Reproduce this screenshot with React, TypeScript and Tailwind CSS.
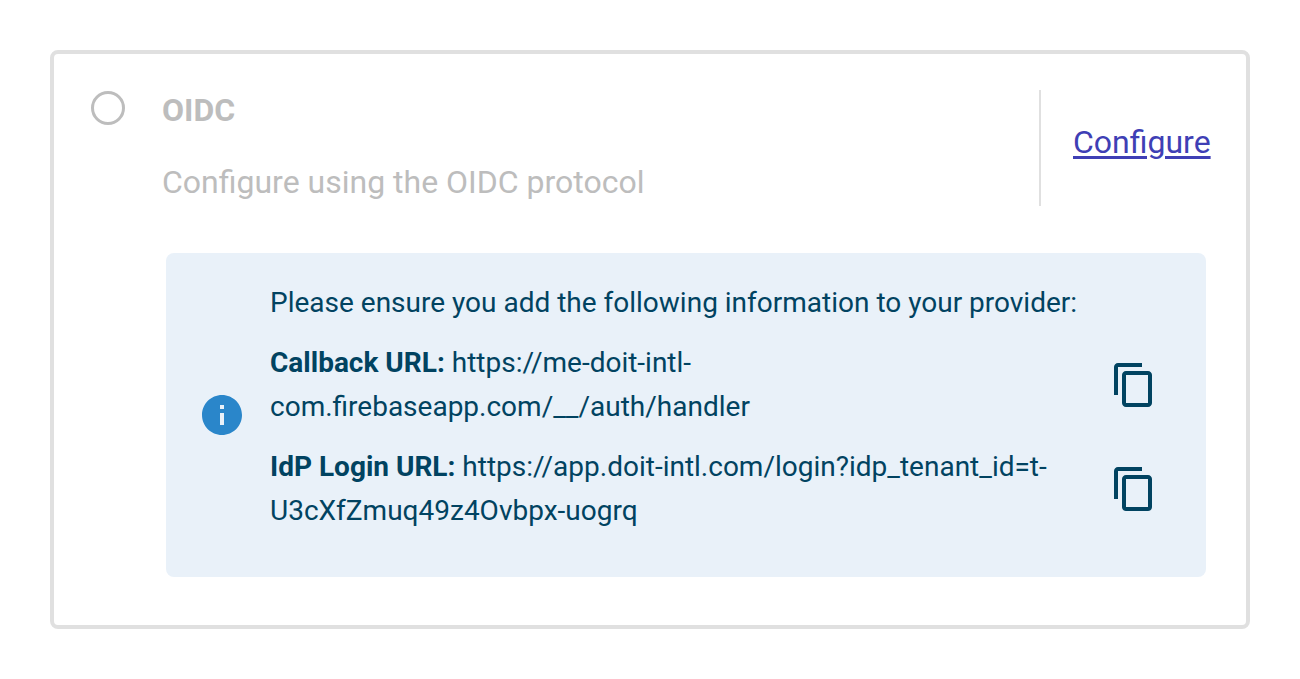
import { MdContentCopy, MdInfo } from "react-icons/md";

type Endpoint = { label: string; url: string };

const endpoints: Endpoint[] = [
  { label: "Callback URL:", url: "https://me-doit-intl-com.firebaseapp.com/__/auth/handler" },
  { label: "IdP Login URL:", url: "https://app.doit-intl.com/login?idp_tenant_id=t-U3cXfZmuq49z4Ovbpx-uogrq" },
];

function EndpointRow({ label, url }: Endpoint) {
  return (
    <div className="flex items-center gap-8 pr-4">
      <p className="min-w-0 flex-1 break-words">
        <strong className="font-bold">{label}</strong> {url}
      </p>
      <button
        type="button"
        aria-label={`Copy ${label}`}
        onClick={() => navigator.clipboard?.writeText(url)}
        className="shrink-0"
      >
        <MdContentCopy className="size-12" />
      </button>
    </div>
  );
}

export default function App() {
  return (
    <main className="bg-white p-[50px] font-[Roboto,sans-serif]">
      <section className="rounded-lg border-4 border-[#e0e0e0] pt-9 pr-8 pb-12 pl-9">
        <div className="flex justify-between text-[32px] leading-10">
          <div className="flex gap-[37px] pl-px">
            <input
              id="oidc"
              type="radio"
              disabled
              className="mt-px size-[34px] appearance-none rounded-full border-3 border-[#bdbdbd]"
            />
            <div className="text-[#bdbdbd]">
              <label htmlFor="oidc" className="block font-bold">OIDC</label>
              <p className="mt-8">Configure using the OIDC protocol</p>
            </div>
          </div>
          <div className="flex h-[116px] w-[175px] items-center border-l-2 border-[#e0e0e0] pb-3 pl-8">
            <a href="#configure" className="text-[#3f3fb5] underline decoration-3 underline-offset-3">
              Configure
            </a>
          </div>
        </div>
        <div className="mt-[47px] mr-2 ml-[76px] flex items-center rounded-lg bg-[#e9f1f9] px-8 py-7 text-[#014361]">
          <MdInfo className="size-12 shrink-0 text-[#2a86ca]" />
          <div className="ml-6 flex min-w-0 grow flex-col gap-4 pb-4 text-[28px] leading-11">
            <p>Please ensure you add the following information to your provider:</p>
            {endpoints.map((e) => (
              <EndpointRow key={e.label} {...e} />
            ))}
          </div>
        </div>
      </section>
    </main>
  );
}
